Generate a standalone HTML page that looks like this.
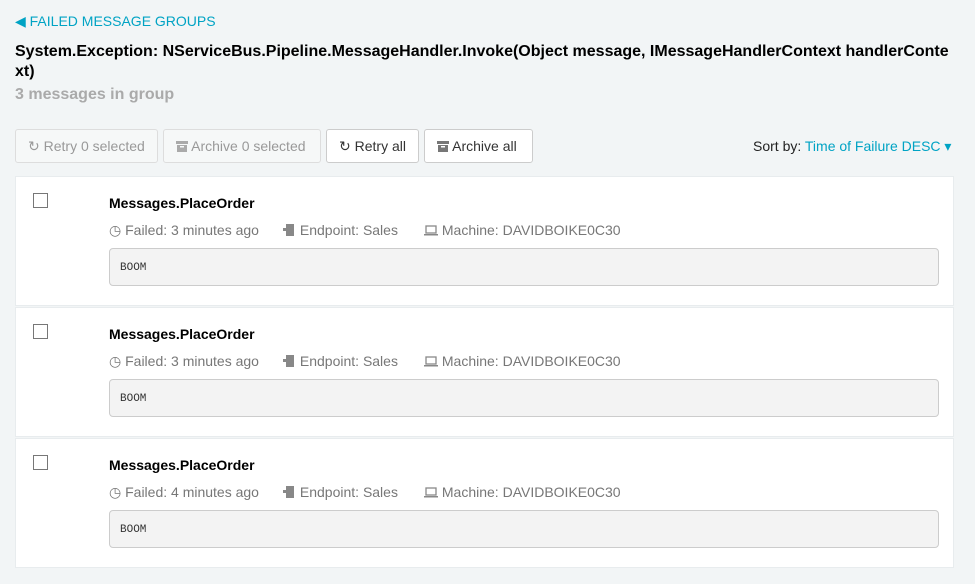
<!DOCTYPE html>
<html><head><style>
*{box-sizing:border-box;margin:0;padding:0}
body{width:975px;height:584px;background:#f2f5f6;font-family:"Liberation Sans",sans-serif;position:relative;overflow:hidden;color:#000}
.abs{position:absolute;white-space:nowrap}
.link{color:#00a3c4}
.btn{position:absolute;top:129px;height:34px;border:1px solid #ccc;border-radius:3px;background:#fff;font-size:14px;color:#333;line-height:32px;padding-left:12px}
.btn.dis{color:#999;background:#f6f8f8;border-color:#ddd}
.card{position:absolute;left:15px;width:939px;height:130px;background:#fff;border:1px solid #e8ecee}
.cb{position:absolute;left:17px;top:16px;width:15px;height:15px;border:1px solid #777;background:#fff}
.title{position:absolute;left:93px;top:18px;font-weight:bold;font-size:14px}
.meta{position:absolute;top:45px;font-size:14px;color:#777;white-space:nowrap}
.pre{position:absolute;left:93px;top:71px;width:830px;height:38px;background:#f3f3f3;border:1px solid #ccc;border-radius:4px;font-family:"Liberation Mono",monospace;font-size:11px;color:#333;padding:13px 0 0 10px}
svg{vertical-align:-1px}
</style></head><body>
<div class="abs link" style="left:15px;top:13px;font-size:14px">&#9664; FAILED MESSAGE GROUPS</div>
<div class="abs" style="left:15px;top:42px;font-size:16px;font-weight:bold;line-height:20px;white-space:normal;width:940px">System.Exception: NServiceBus.Pipeline.MessageHandler.Invoke(Object message, IMessageHandlerContext handlerConte xt)</div>
<div class="abs" style="left:15px;top:86px;font-size:16px;font-weight:bold;color:#aaa">3 messages in group</div>

<div class="btn dis" style="left:15px;width:143px">&#8635; Retry 0 selected</div>
<div class="btn dis" style="left:163px;width:158px"><svg width="12" height="12"><rect x="0" y="1" width="12" height="3" fill="#aaa"/><rect x="1" y="5" width="10" height="7" fill="#aaa"/><rect x="4" y="6" width="4" height="1.5" fill="#f6f8f8"/></svg> Archive 0 selected</div>
<div class="btn" style="left:326px;width:93px">&#8635; Retry all</div>
<div class="btn" style="left:424px;width:109px"><svg width="12" height="12"><rect x="0" y="1" width="12" height="3" fill="#777"/><rect x="1" y="5" width="10" height="7" fill="#777"/><rect x="4" y="6" width="4" height="1.5" fill="#fff"/></svg> Archive all</div>
<div class="abs" style="left:753px;top:138px;font-size:14px;color:#222">Sort by: <span class="link">Time of Failure DESC &#9662;</span></div>

<div class="card" style="top:176px"><div class="cb"></div><div class="title">Messages.PlaceOrder</div>
<div class="meta" style="left:93px">&#9719; Failed: 3 minutes ago</div><div class="meta" style="left:267px"><svg width="13" height="12"><rect x="3" y="0" width="8" height="12" fill="#888"/><rect x="0" y="4" width="6" height="3" fill="#888"/></svg> Endpoint: Sales</div><div class="meta" style="left:408px"><svg width="14" height="12"><rect x="2" y="2" width="10" height="7" fill="none" stroke="#888" stroke-width="1.3"/><rect x="0" y="10" width="14" height="1.5" fill="#888"/></svg> Machine: DAVIDBOIKE0C30</div>
<div class="pre">BOOM</div></div>

<div class="card" style="top:307px"><div class="cb"></div><div class="title">Messages.PlaceOrder</div>
<div class="meta" style="left:93px">&#9719; Failed: 3 minutes ago</div><div class="meta" style="left:267px"><svg width="13" height="12"><rect x="3" y="0" width="8" height="12" fill="#888"/><rect x="0" y="4" width="6" height="3" fill="#888"/></svg> Endpoint: Sales</div><div class="meta" style="left:408px"><svg width="14" height="12"><rect x="2" y="2" width="10" height="7" fill="none" stroke="#888" stroke-width="1.3"/><rect x="0" y="10" width="14" height="1.5" fill="#888"/></svg> Machine: DAVIDBOIKE0C30</div>
<div class="pre">BOOM</div></div>

<div class="card" style="top:438px"><div class="cb"></div><div class="title">Messages.PlaceOrder</div>
<div class="meta" style="left:93px">&#9719; Failed: 4 minutes ago</div><div class="meta" style="left:267px"><svg width="13" height="12"><rect x="3" y="0" width="8" height="12" fill="#888"/><rect x="0" y="4" width="6" height="3" fill="#888"/></svg> Endpoint: Sales</div><div class="meta" style="left:408px"><svg width="14" height="12"><rect x="2" y="2" width="10" height="7" fill="none" stroke="#888" stroke-width="1.3"/><rect x="0" y="10" width="14" height="1.5" fill="#888"/></svg> Machine: DAVIDBOIKE0C30</div>
<div class="pre">BOOM</div></div>
</body></html>
